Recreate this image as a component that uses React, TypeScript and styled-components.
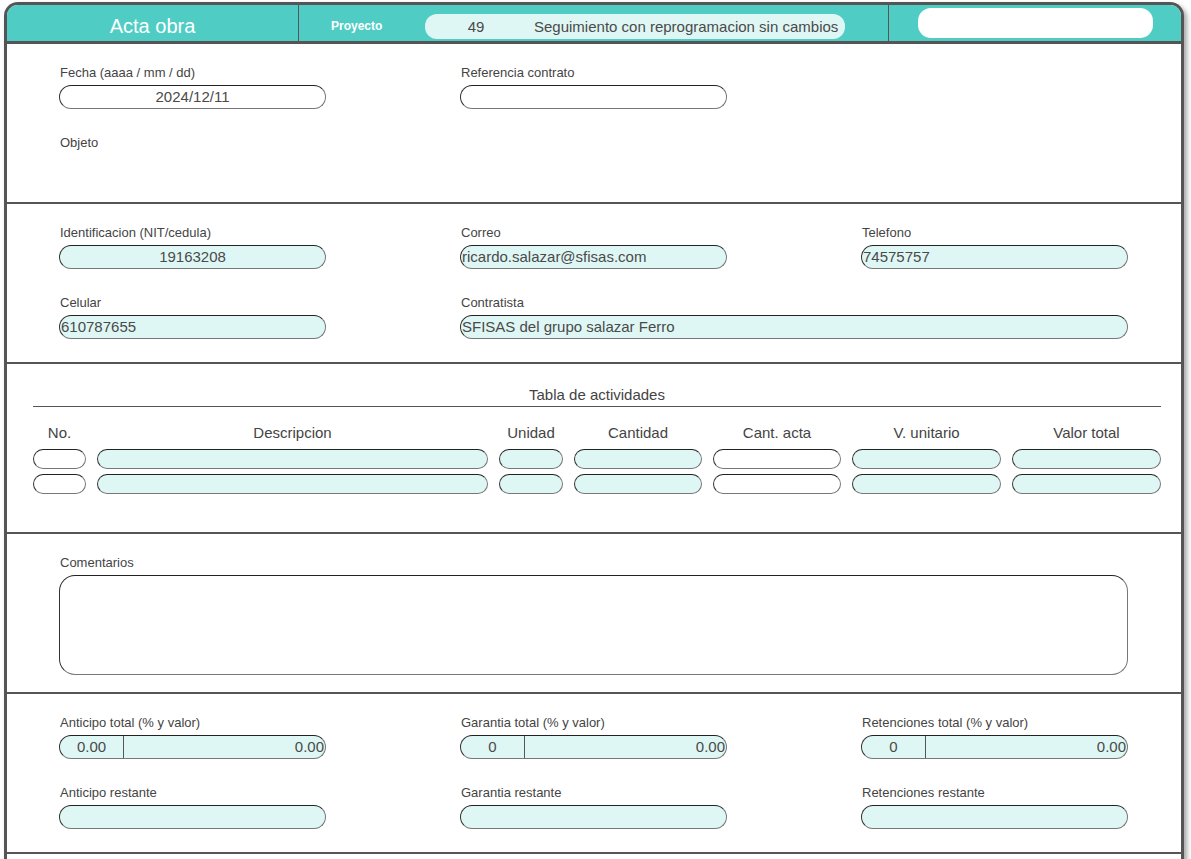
import React from "react";
import styled, { createGlobalStyle } from "styled-components";

const GlobalStyle = createGlobalStyle`
  html, body {
    margin: 0;
    padding: 0;
    background: #ffffff;
    font-family: "Liberation Sans", Arial, sans-serif;
    overflow: hidden;
  }
`;

const colors = {
  teal: "#4fcdc4",
  frame: "#555555",
  field: "#dff7f4",
  label: "#444444",
  text: "#4a4a4a",
};

const Frame = styled.div`
  margin: 2px 0 0 4px;
  width: 1180px;
  box-sizing: border-box;
  border: 3px solid ${colors.frame};
  border-bottom: none;
  border-radius: 14px 14px 0 0;
  box-shadow: 3px 3px 5px rgba(0, 0, 0, 0.35);
  background: #fff;
`;

const Header = styled.header`
  display: flex;
  height: 36px;
  background: ${colors.teal};
  border-radius: 11px 11px 0 0;
  border-bottom: 3px solid ${colors.frame};
`;

const TitleCell = styled.div`
  width: 291px;
  display: flex;
  align-items: center;
  justify-content: center;
  padding-top: 7px;
  box-sizing: border-box;
  color: #fff;
  font-size: 20px;
`;

const ProjectCell = styled.div`
  width: 590px;
  display: flex;
  align-items: center;
  padding: 6px 0 0 32px;
  box-sizing: border-box;
  border-left: 1px solid ${colors.frame};
`;

const ProjectLabel = styled.span`
  color: #fff;
  font-size: 12px;
  font-weight: bold;
  width: 94px;
`;

const ProjectPill = styled.div`
  display: flex;
  align-items: center;
  width: 420px;
  height: 25px;
  border-radius: 12px;
  background: ${colors.field};
  color: ${colors.text};
  font-size: 15px;
`;

const ProjectId = styled.span`
  width: 102px;
  margin-right: 7px;
  text-align: center;
`;

const SearchCell = styled.div`
  flex: 1;
  display: flex;
  align-items: flex-start;
  padding: 3px 0 0 29px;
  border-left: 1px solid ${colors.frame};
`;

const WhitePill = styled.div`
  width: 235px;
  height: 30px;
  background: #fff;
  border-radius: 13px;
`;

const Section = styled.section<{ $h?: number }>`
  min-height: ${(p) => p.$h ?? 160}px;
  box-sizing: border-box;
  border-bottom: 2px solid ${colors.frame};
  padding: 21px 20px 0 52px;
`;

const FieldGrid = styled.div`
  display: grid;
  grid-template-columns: repeat(3, 267px);
  column-gap: 134px;
  row-gap: 26px;
`;

const Field = styled.div<{ $span?: number; $w?: number }>`
  display: flex;
  flex-direction: column;
  grid-column: span ${(p) => p.$span ?? 1};
  ${(p) => (p.$w ? `width: ${p.$w}px;` : "")}
`;

const Label = styled.label`
  font-size: 13px;
  line-height: 14px;
  color: ${colors.label};
  margin: 1px 0 5px 1px;
  white-space: nowrap;
`;

const Input = styled.div<{ $white?: boolean; $center?: boolean }>`
  height: 24px;
  box-sizing: border-box;
  border: 1px solid #777;
  border-top-color: #222;
  border-left-color: #333;
  border-radius: 12px;
  background: ${(p) => (p.$white ? "#fff" : colors.field)};
  color: ${colors.text};
  font-size: 15px;
  line-height: 22px;
  padding: 0 1px;
  text-align: ${(p) => (p.$center ? "center" : "left")};
  white-space: nowrap;
  overflow: hidden;
`;

const SplitInput = styled(Input)`
  display: flex;
  padding: 0;
`;

const SplitLeft = styled.span`
  width: 63px;
  text-align: center;
  border-right: 1px solid ${colors.frame};
`;

const SplitRight = styled.span`
  flex: 1;
  text-align: right;
  padding-right: 1px;
`;

const TableSection = styled(Section)`
  padding: 22px 20px 0 26px;
`;

const TableTitle = styled.div`
  text-align: center;
  font-size: 15px;
  line-height: 17px;
  color: ${colors.label};
  padding-bottom: 3px;
  border-bottom: 1px solid ${colors.frame};
`;

const TableGrid = styled.div`
  display: grid;
  grid-template-columns: 53px 391px 64px 128px 128px 149px 149px;
  column-gap: 11px;
  row-gap: 5px;
  margin-top: 17px;
`;

const ColHead = styled.div`
  text-align: center;
  font-size: 15px;
  line-height: 17px;
  color: ${colors.label};
  margin-bottom: 3px;
`;

const Cell = styled(Input)`
  height: 20px;
  border-radius: 10px;
`;

const TextArea = styled(Input)`
  height: 100px;
  border-radius: 16px;
  background: #fff;
`;

const columns = [
  { title: "No.", white: true },
  { title: "Descripcion" },
  { title: "Unidad" },
  { title: "Cantidad" },
  { title: "Cant. acta", white: true },
  { title: "V. unitario" },
  { title: "Valor total" },
];

export default function App() {
  return (
    <>
      <GlobalStyle />
      <Frame>
        <Header>
          <TitleCell>Acta obra</TitleCell>
          <ProjectCell>
            <ProjectLabel>Proyecto</ProjectLabel>
            <ProjectPill>
              <ProjectId>49</ProjectId>
              <span>Seguimiento con reprogramacion sin cambios</span>
            </ProjectPill>
          </ProjectCell>
          <SearchCell>
            <WhitePill />
          </SearchCell>
        </Header>

        <Section>
          <FieldGrid>
            <Field>
              <Label>Fecha (aaaa / mm / dd)</Label>
              <Input $white $center>2024/12/11</Input>
            </Field>
            <Field>
              <Label>Referencia contrato</Label>
              <Input $white />
            </Field>
            <div />
            <Field>
              <Label>Objeto</Label>
            </Field>
          </FieldGrid>
        </Section>

        <Section>
          <FieldGrid>
            <Field>
              <Label>Identificacion (NIT/cedula)</Label>
              <Input $center>19163208</Input>
            </Field>
            <Field>
              <Label>Correo</Label>
              <Input>ricardo.salazar@sfisas.com</Input>
            </Field>
            <Field>
              <Label>Telefono</Label>
              <Input>74575757</Input>
            </Field>
            <Field>
              <Label>Celular</Label>
              <Input>610787655</Input>
            </Field>
            <Field $span={2}>
              <Label>Contratista</Label>
              <Input>SFISAS del grupo salazar Ferro</Input>
            </Field>
          </FieldGrid>
        </Section>

        <TableSection $h={170}>
          <TableTitle>Tabla de actividades</TableTitle>
          <TableGrid>
            {columns.map((c) => (
              <ColHead key={c.title}>{c.title}</ColHead>
            ))}
            {[0, 1].map((row) =>
              columns.map((c) => <Cell key={`${row}-${c.title}`} $white={c.white} />)
            )}
          </TableGrid>
        </TableSection>

        <Section>
          <Field $w={1069}>
            <Label>Comentarios</Label>
            <TextArea />
          </Field>
        </Section>

        <Section>
          <FieldGrid>
            <Field>
              <Label>Anticipo total (% y valor)</Label>
              <SplitInput>
                <SplitLeft>0.00</SplitLeft>
                <SplitRight>0.00</SplitRight>
              </SplitInput>
            </Field>
            <Field>
              <Label>Garantia total (% y valor)</Label>
              <SplitInput>
                <SplitLeft>0</SplitLeft>
                <SplitRight>0.00</SplitRight>
              </SplitInput>
            </Field>
            <Field>
              <Label>Retenciones total (% y valor)</Label>
              <SplitInput>
                <SplitLeft>0</SplitLeft>
                <SplitRight>0.00</SplitRight>
              </SplitInput>
            </Field>
            <Field>
              <Label>Anticipo restante</Label>
              <Input />
            </Field>
            <Field>
              <Label>Garantia restante</Label>
              <Input />
            </Field>
            <Field>
              <Label>Retenciones restante</Label>
              <Input />
            </Field>
          </FieldGrid>
        </Section>

        <Section $h={120} />
      </Frame>
    </>
  );
}
